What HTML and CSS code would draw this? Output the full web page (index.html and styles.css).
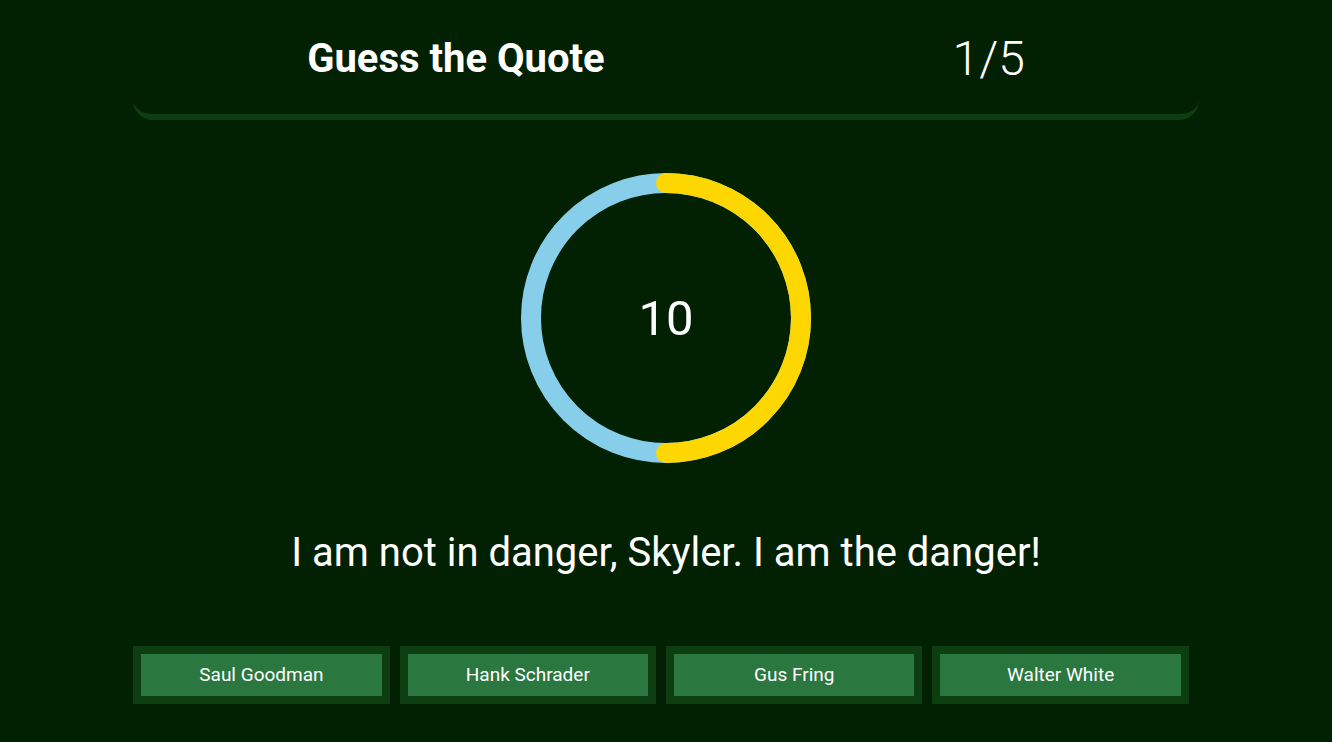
FILE: index.html
```html
<!DOCTYPE html>
<html lang="en">
<head>
<meta charset="utf-8">
<title>Guess the Quote</title>
<link rel="stylesheet" href="styles.css">
</head>
<body>
<div class="app">
  <header class="header">
    <h1 class="title">Guess the Quote</h1>
    <div class="progress">1/5</div>
  </header>
  <div class="timer">
    <svg class="ring" width="290" height="290" viewBox="0 0 290 290">
      <circle cx="145" cy="145" r="135" fill="none" stroke="#87ceeb" stroke-width="20"/>
      <path d="M145 10 A135 135 0 0 1 145 280" fill="none" stroke="#ffd700" stroke-width="20" stroke-linecap="round"/>
    </svg>
    <div class="count">10</div>
  </div>
  <p class="quote">I am not in danger, Skyler. I am the danger!</p>
  <div class="options">
    <button class="option"><span class="option-inner">Saul Goodman</span></button>
    <button class="option"><span class="option-inner">Hank Schrader</span></button>
    <button class="option"><span class="option-inner">Gus Fring</span></button>
    <button class="option"><span class="option-inner">Walter White</span></button>
  </div>
</div>
</body>
</html>
```

FILE: styles.css
```css
* { box-sizing: border-box; }
html, body {
  margin: 0;
  padding: 0;
  background: #022002;
  color: #ffffff;
  font-family: Roboto, "Noto Sans", "Liberation Sans", sans-serif;
}
.app {
  width: 80%;
  margin: 0 auto;
  display: flex;
  flex-direction: column;
  align-items: center;
}
.header {
  width: 100%;
  height: 120px;
  display: flex;
  justify-content: space-around;
  align-items: center;
  padding-top: 4px;
  border-bottom: 6px solid #0d3e12;
  border-radius: 0 0 20px 20px;
}
.title {
  margin: 0;
  font-size: 40px;
  font-weight: 700;
  line-height: 1;
}
.progress {
  font-size: 48px;
  font-weight: 300;
  line-height: 1;
}
.timer {
  position: relative;
  width: 290px;
  height: 290px;
  margin-top: 53px;
}
.ring { display: block; }
.count {
  position: absolute;
  inset: 0;
  display: flex;
  align-items: center;
  justify-content: center;
  font-size: 49px;
  font-weight: 400;
}
.quote {
  margin: 67px 0 0;
  font-size: 40px;
  line-height: 46px;
  font-weight: 400;
  text-align: center;
}
.options {
  width: 100%;
  display: flex;
  margin-top: 70px;
}
.option {
  flex: 1;
  margin-right: 10px;
  padding: 8px;
  background: #0d3e12;
  border: none;
  font-family: inherit;
  cursor: pointer;
}
.option-inner {
  display: block;
  height: 42px;
  line-height: 42px;
  background: #2a773f;
  color: #ffffff;
  font-size: 19px;
  font-weight: 400;
  text-align: center;
}
```
